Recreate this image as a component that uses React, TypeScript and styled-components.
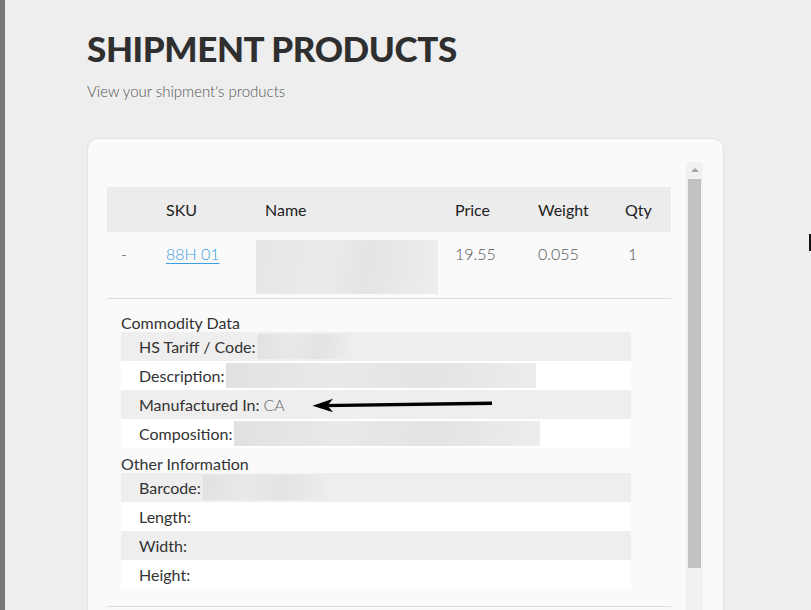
import React from "react";
import styled, { createGlobalStyle } from "styled-components";

const Global = createGlobalStyle`
  html, body { margin: 0; padding: 0; height: 610px; overflow: hidden; background: #eeeeee; }
  body { font-family: Lato, "Liberation Sans", sans-serif; color: #333; }
  #root { height: 610px; }
`;

const Page = styled.div`
  height: 610px;
  box-sizing: border-box;
  border-left: 5px solid #777777;
  padding: 29px 0 0 82px;
  position: relative;
  overflow: hidden;
`;

const Title = styled.h1`
  margin: 0;
  font-family: Lato, "Liberation Sans", sans-serif;
  font-weight: 900;
  font-size: 35px;
  line-height: 39px;
  color: #2f2f2f;
  letter-spacing: -0.4px;
`;

const Subtitle = styled.p`
  margin: 14px 0 0 0;
  font-weight: 300;
  font-size: 15px;
  line-height: 18px;
  color: #555;
`;

const Card = styled.div`
  margin-top: 38px;
  width: 637px;
  box-sizing: border-box;
  background: #fafafa;
  border: 1px solid #e2e2e2;
  border-radius: 11px;
  padding: 23px 20px 0 19px;
  height: 520px;
`;

const Scroller = styled.div`
  height: 460px;
  display: flex;
  gap: 15px;
  align-items: stretch;
`;

const Viewport = styled.div`
  width: 564px;
  overflow: hidden;
`;

const ScrollBar = styled.div`
  width: 17px;
  display: flex;
  flex-direction: column;
  background: #f1f1f1;
`;

const ScrollButton = styled.div`
  height: 17px;
  display: flex;
  align-items: center;
  justify-content: center;
  &::before {
    content: "";
    width: 0;
    height: 0;
    border-left: 4px solid transparent;
    border-right: 4px solid transparent;
    border-bottom: 4px solid #a3a3a3;
    margin-top: -1px;
  }
`;

const Thumb = styled.div`
  height: 389px;
  margin: 0 2px;
  background: #c1c1c1;
`;

const Content = styled.div`
  padding: 25px 0 0 0;
`;

const cols = "50px 99px 190px 83px 87px 55px";

const HeadRow = styled.div`
  display: grid;
  grid-template-columns: ${cols};
  height: 45px;
  align-items: center;
  background: #ececec;
`;

const HeadCell = styled.div`
  padding-left: 9px;
  font-size: 16px;
  color: #222;
`;

const DataRow = styled.div`
  display: grid;
  grid-template-columns: ${cols};
  padding: 8px 0 4px 0;
  border-bottom: 1px solid #dddddd;
  align-items: start;
`;

const Cell = styled.div<{ $pad?: number; $color?: string }>`
  padding-left: ${(p) => (p.$pad ?? 9)}px;
  font-size: 16px;
  line-height: 28px;
  color: ${(p) => p.$color ?? "#555"};
  font-weight: 300;
`;

const SkuLink = styled.a`
  color: #3c9ee0;
  text-decoration: underline;
  text-underline-offset: 3px;
  font-weight: 300;
  cursor: pointer;
`;

const Redacted = styled.div<{ $w: number; $h: number }>`
  width: ${(p) => p.$w}px;
  height: ${(p) => p.$h}px;
  background: linear-gradient(100deg, #e6e6e6 0%, #ebebeb 40%, #e4e4e4 60%, #eeeeee 100%);
`;

const Details = styled.div`
  padding: 8px 0 17px 14px;
  border-bottom: 1px solid #dddddd;
`;

const GroupLabel = styled.div`
  height: 25px;
  box-sizing: border-box;
  padding-top: 6px;
  line-height: 20px;
  font-size: 16px;
  color: #333;
`;

const Rows = styled.div`
  width: 510px;
  display: flex;
  flex-direction: column;
`;

const InfoRow = styled.div`
  height: 29px;
  display: flex;
  align-items: center;
  padding-left: 18px;
  font-size: 16px;
  color: #333;
  background: #ffffff;
  &:nth-child(odd) { background: #eeeeee; }
`;

const Value = styled.span`
  color: #666;
  font-weight: 300;
  margin-left: 4px;
`;

const Blur = styled.span<{ $w: number }>`
  display: inline-block;
  width: ${(p) => p.$w}px;
  height: 25px;
  margin-left: 2px;
  background: linear-gradient(95deg, #e1e1e1 0%, #e9e9e9 35%, #e3e3e3 65%, #ededed 100%);
`;

const ArrowSvg = styled.svg`
  margin-left: 27px;
  margin-top: 1px;
`;

const Cursor = styled.div`
  position: absolute;
  right: 0;
  top: 234px;
  width: 2px;
  height: 17px;
  background: #111;
`;

function Arrow() {
  return (
    <ArrowSvg width="182" height="16" viewBox="0 0 182 16">
      <path d="M10 8.6 L180 6.2" stroke="#000" strokeWidth="3.4" fill="none" strokeLinecap="butt" />
      <path d="M0.5 8.7 L21 1.8 L15.5 8.5 L21 15.2 Z" fill="#000" />
    </ArrowSvg>
  );
}

export default function App() {
  return (
    <>
      <Global />
      <Page>
        <Title>SHIPMENT PRODUCTS</Title>
        <Subtitle>View your shipment's products</Subtitle>
        <Card>
          <Scroller>
            <Viewport>
              <Content>
                <HeadRow>
                  <HeadCell />
                  <HeadCell>SKU</HeadCell>
                  <HeadCell>Name</HeadCell>
                  <HeadCell>Price</HeadCell>
                  <HeadCell>Weight</HeadCell>
                  <HeadCell>Qty</HeadCell>
                </HeadRow>
                <DataRow>
                  <Cell $pad={14} $color="#444">-</Cell>
                  <Cell>
                    <SkuLink>88H 01</SkuLink>
                  </Cell>
                  <Cell $pad={0}>
                    <Redacted $w={182} $h={54} />
                  </Cell>
                  <Cell>19.55</Cell>
                  <Cell>0.055</Cell>
                  <Cell $pad={12} $color="#5e4c4c">1</Cell>
                </DataRow>
                <Details>
                  <GroupLabel>Commodity Data</GroupLabel>
                  <Rows>
                    <InfoRow>
                      HS Tariff / Code:<Blur $w={93} />
                    </InfoRow>
                    <InfoRow>
                      Description:<Blur $w={310} />
                    </InfoRow>
                    <InfoRow>
                      Manufactured In:<Value>CA</Value>
                      <Arrow />
                    </InfoRow>
                    <InfoRow>
                      Composition:<Blur $w={306} />
                    </InfoRow>
                  </Rows>
                  <GroupLabel>Other Information</GroupLabel>
                  <Rows>
                    <InfoRow>
                      Barcode:<Blur $w={123} />
                    </InfoRow>
                    <InfoRow>Length:</InfoRow>
                    <InfoRow>Width:</InfoRow>
                    <InfoRow>Height:</InfoRow>
                  </Rows>
                </Details>
              </Content>
            </Viewport>
            <ScrollBar>
              <ScrollButton />
              <Thumb />
            </ScrollBar>
          </Scroller>
        </Card>
        <Cursor />
      </Page>
    </>
  );
}
